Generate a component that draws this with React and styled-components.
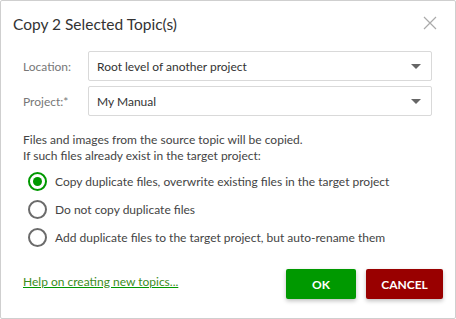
import React, { useState } from 'react'
import styled, { createGlobalStyle } from 'styled-components'

const GlobalStyle = createGlobalStyle`
  html, body {
    margin: 0;
    padding: 0;
    background: #ffffff;
  }
  body {
    font-family: Lato, "Open Sans", sans-serif;
  }
`;

const Dialog = styled.div`
  box-sizing: border-box;
  width: 456px;
  height: 319px;
  border: 1px solid #cfcfcf;
  border-radius: 2px;
  background: #fff;
  display: flex;
  flex-direction: column;
  padding: 0 12px 0 22px;
`;

const Header = styled.div`
  display: flex;
  align-items: center;
  justify-content: space-between;
  height: 44px;
  margin-left: -10px;
`;

const Title = styled.div`
  font-size: 15.5px;
  color: #333;
  padding-top: 2px;
`;

const Close = styled.button`
  border: none;
  background: none;
  padding: 0;
  width: 14px;
  height: 14px;
  margin-right: 6px;
  cursor: pointer;
  display: flex;
`;

const Fields = styled.div`
  display: grid;
  grid-template-columns: 65px 1fr;
  row-gap: 5px;
  align-items: center;
  margin-top: 6px;
  margin-right: 11px;
`;

const Label = styled.label`
  font-size: 12px;
  color: #777;
`;

const Select = styled.div`
  box-sizing: border-box;
  height: 30px;
  border: 1px solid #d9d9d9;
  border-radius: 2px;
  display: flex;
  align-items: center;
  justify-content: space-between;
  padding: 0 10px 0 8px;
  font-size: 12px;
  color: #333;
`;

const Arrow = styled.span`
  width: 0;
  height: 0;
  border-left: 5px solid transparent;
  border-right: 5px solid transparent;
  border-top: 5px solid #666;
`;

const Note = styled.p`
  margin: 16px 0 0;
  font-size: 12px;
  line-height: 16px;
  color: #444;
`;

const Options = styled.div`
  display: flex;
  flex-direction: column;
  gap: 9px;
  margin-top: 8px;
  padding-left: 5px;
`;

const Option = styled.label`
  display: flex;
  align-items: center;
  gap: 8px;
  font-size: 12px;
  color: #444;
  cursor: pointer;
`;

const Radio = styled.span`
  box-sizing: border-box;
  width: 19px;
  height: 19px;
  border-radius: 50%;
  border: 2px solid ${p => (p.checked ? '#009900' : '#6b6b6b')};
  display: flex;
  align-items: center;
  justify-content: center;
  &::after {
    content: '';
    width: 9px;
    height: 9px;
    border-radius: 50%;
    background: #009900;
    display: ${p => (p.checked ? 'block' : 'none')};
  }
`;

const Footer = styled.div`
  display: flex;
  align-items: center;
  justify-content: space-between;
  margin-top: auto;
  margin-bottom: 19px;
`;

const HelpLink = styled.a`
  font-size: 12px;
  color: #3c8c1c;
  text-decoration: underline;
  text-decoration-color: #009900;
  margin-top: -6px;
`;

const Buttons = styled.div`
  display: flex;
  gap: 10px;
`;

const Button = styled.button`
  height: 30px;
  min-width: ${p => p.width}px;
  border: none;
  border-radius: 2px;
  background: ${p => p.bg};
  color: #fff;
  font-family: inherit;
  font-weight: 700;
  font-size: 12px;
  box-shadow: 0 2px 4px rgba(0, 0, 0, 0.25);
  cursor: pointer;
`;

const options = [
  'Copy duplicate files, overwrite existing files in the target project',
  'Do not copy duplicate files',
  'Add duplicate files to the target project, but auto-rename them',
];

export default function App() {
  const [choice, setChoice] = useState(0);

  return (
    <>
      <GlobalStyle />
      <Dialog>
        <Header>
          <Title>Copy 2 Selected Topic(s)</Title>
          <Close aria-label="Close">
            <svg width="14" height="14" viewBox="0 0 14 14">
              <path d="M1 1L13 13M13 1L1 13" stroke="#aaa" strokeWidth="1.2" />
            </svg>
          </Close>
        </Header>
        <Fields>
          <Label>Location:</Label>
          <Select>
            <span>Root level of another project</span>
            <Arrow />
          </Select>
          <Label>Project:*</Label>
          <Select>
            <span>My Manual</span>
            <Arrow />
          </Select>
        </Fields>
        <Note>
          Files and images from the source topic will be copied.
          <br />
          If such files already exist in the target project:
        </Note>
        <Options>
          {options.map((text, i) => (
            <Option key={i} onClick={() => setChoice(i)}>
              <Radio checked={choice === i} />
              {text}
            </Option>
          ))}
        </Options>
        <Footer>
          <HelpLink href="#">Help on creating new topics...</HelpLink>
          <Buttons>
            <Button bg="#009900" width={70}>OK</Button>
            <Button bg="#990000" width={77}>CANCEL</Button>
          </Buttons>
        </Footer>
      </Dialog>
    </>
  );
}
